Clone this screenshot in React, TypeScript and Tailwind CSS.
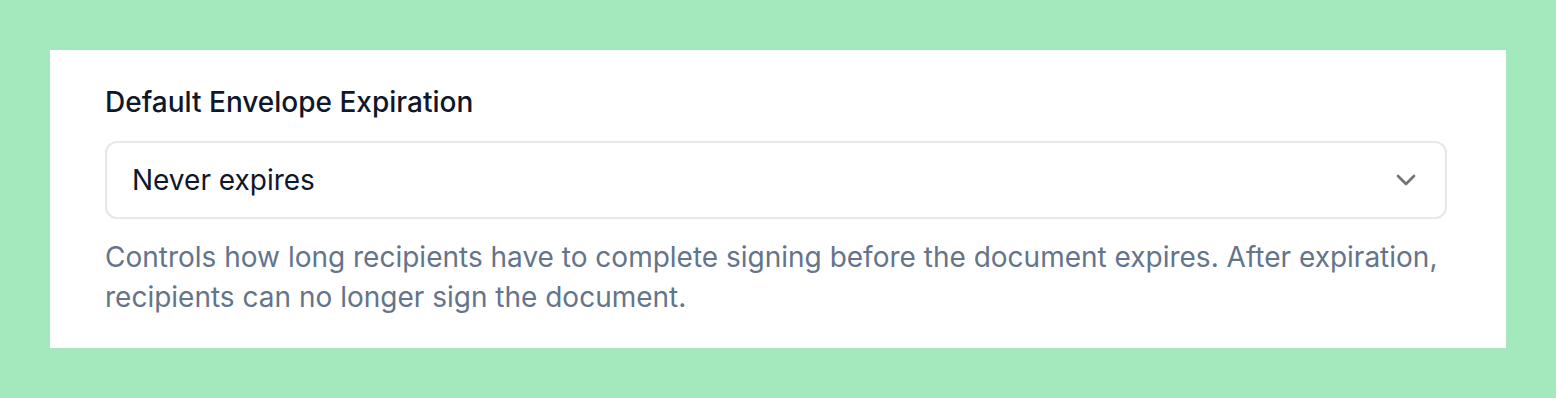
export default function App() {
  return (
    <div className="min-h-[398px] w-[1556px] bg-[#a3e9bd] p-[50px] font-['Inter',sans-serif]">
      <div className="bg-white h-[298px] pl-[55px] pr-[59px] pt-[38px]">
        <label className="block text-[28px] leading-[28px] font-medium text-[#0f172a]">
          Default Envelope Expiration
        </label>
        <button
          type="button"
          className="mt-[25px] flex h-[78px] w-full items-center justify-between rounded-[12px] border-2 border-[#e5e7eb] bg-white pl-[25px] pr-[23px] text-left"
        >
          <span className="text-[28px] text-[#0f172a]">Never expires</span>
          <svg width="32" height="32" viewBox="0 0 24 24" fill="none" stroke="#737373" strokeWidth="2" strokeLinecap="round" strokeLinejoin="round">
            <path d="m6 9 6 6 6-6" />
          </svg>
        </button>
        <p className="mt-[18px] text-[28px] leading-[40px] text-[#64748b]">
          Controls how long recipients have to complete signing before the document expires. After expiration, recipients can no longer sign the document.
        </p>
      </div>
    </div>
  )
}
